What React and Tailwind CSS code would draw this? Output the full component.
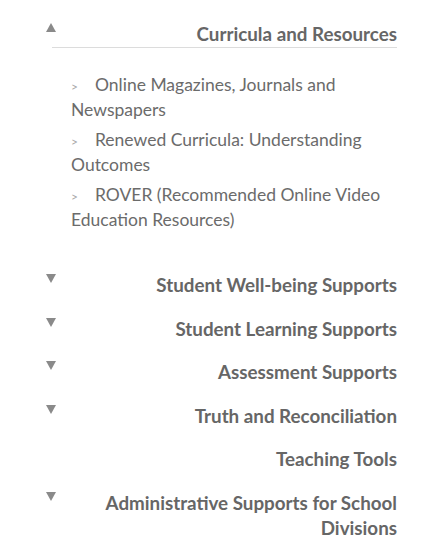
import React from "react";

function Tri({ up }) {
  return (
    <svg width="10" height="9" viewBox="0 0 10 9" className="absolute left-[-6px] top-[2px]">
      {up ? <polygon points="5,0 10,9 0,9" fill="#8a8a8a" /> : <polygon points="0,0 10,0 5,9" fill="#8a8a8a" />}
    </svg>
  );
}

const subs = [
  "Online Magazines, Journals and Newspapers",
  "Renewed Curricula: Understanding Outcomes",
  "ROVER (Recommended Online Video Education Resources)",
];

const heads = [
  { t: "Student Well-being Supports", tri: true },
  { t: "Student Learning Supports", tri: true },
  { t: "Assessment Supports", tri: true },
  { t: "Truth and Reconciliation", tri: true },
  { t: "Teaching Tools", tri: false },
  { t: "Administrative Supports for School Divisions", tri: true },
];

export default function App() {
  return (
    <div className="w-[438px] h-[542px] bg-white overflow-hidden pl-[52px] pr-[41px] pt-[21px]" style={{ fontFamily: "Lato, 'Liberation Sans', sans-serif" }}>
      <div className="relative border-b border-[#dcdcdc] pb-[1px]">
        <Tri up />
        <div className="text-right text-[18.8px] leading-[25px] font-bold text-[#666]">Curricula and Resources</div>
      </div>
      <ul className="pl-[19px] pt-[24px] flex flex-col gap-[5px]">
        {subs.map((s) => (
          <li key={s} className="text-[17.5px] leading-[25px] text-[#6b6b6b]">
            <span className="text-[12px] leading-none text-[#a8a8a8] mr-[17px]">&gt;</span>
            {s}
          </li>
        ))}
      </ul>
      <div className="pt-[40px] flex flex-col gap-[18.5px]">
        {heads.map((h) => (
          <div key={h.t} className="relative">
            {h.tri && <Tri />}
            <div className="text-right text-[18.8px] leading-[25px] font-bold text-[#666] pl-[50px]">{h.t}</div>
          </div>
        ))}
      </div>
    </div>
  );
}
